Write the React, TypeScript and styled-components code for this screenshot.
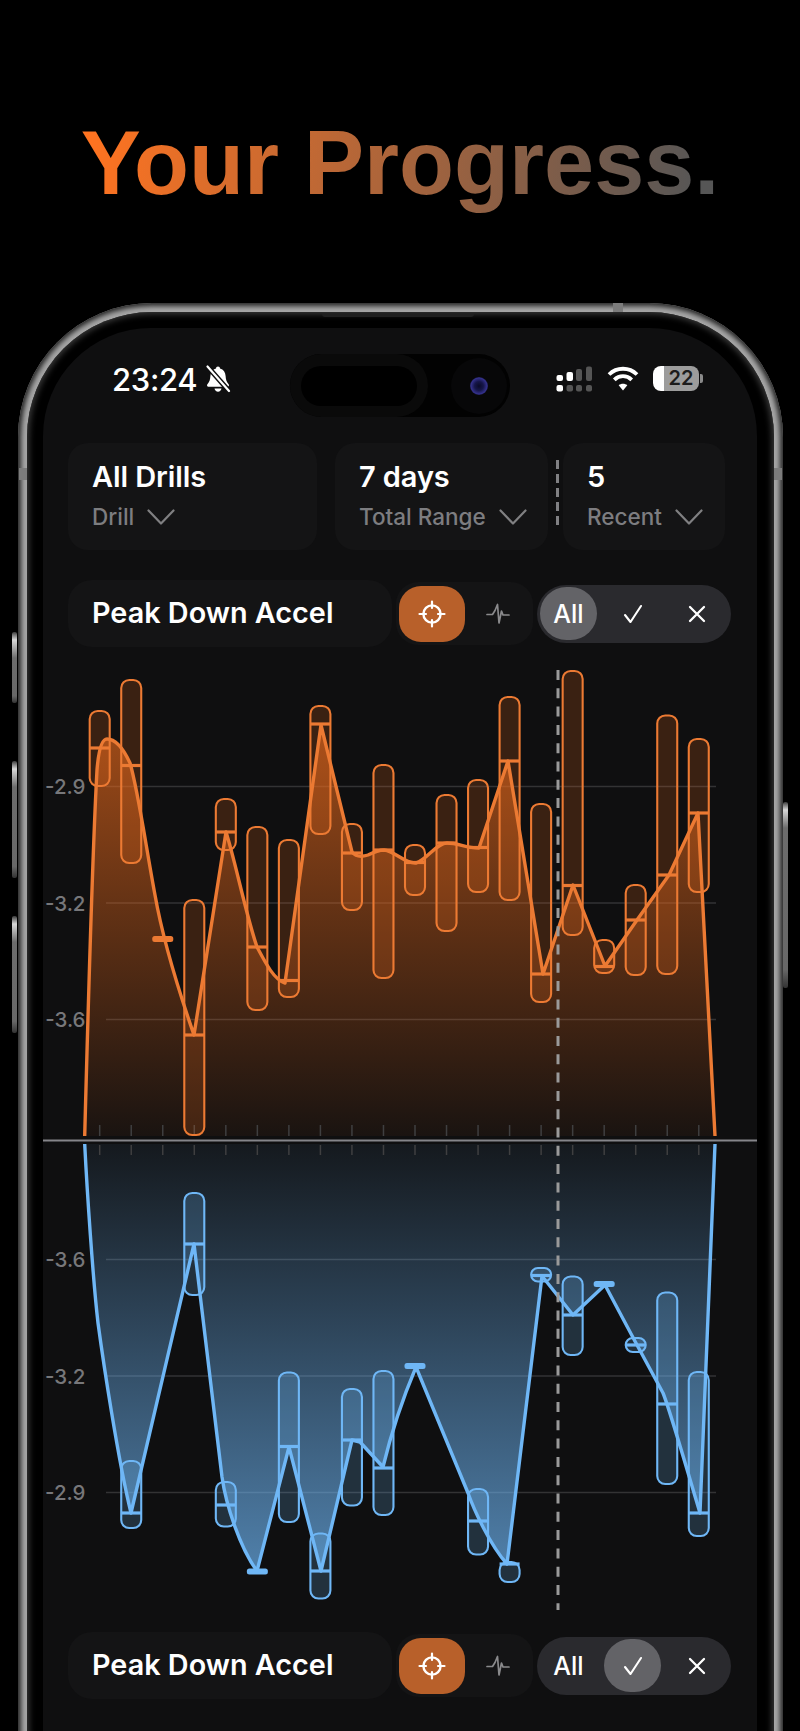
import React from "react";
import styled, { createGlobalStyle } from "styled-components";

const ORANGE = "#ec7a33";
const ORANGE_FILL = "#e8691c";
const BLUE = "#6fb7f6";
const FIRST_X = 99.7;
const STEP = 31.53;
const BAR_W = 20;

type Point = { i: number; top?: number; bottom?: number; tick: number };

const orangeBars: Point[] = [
  { i: 0, top: 711, bottom: 786, tick: 748 },
  { i: 1, top: 680, bottom: 863, tick: 765.5 },
  { i: 2, tick: 939 },
  { i: 3, top: 900, bottom: 1135, tick: 1035 },
  { i: 4, top: 799, bottom: 850, tick: 832 },
  { i: 5, top: 827, bottom: 1010, tick: 947 },
  { i: 6, top: 840, bottom: 997, tick: 980.5 },
  { i: 7, top: 706, bottom: 834, tick: 724 },
  { i: 8, top: 824, bottom: 910, tick: 853 },
  { i: 9, top: 765, bottom: 978, tick: 850 },
  { i: 10, top: 845, bottom: 895, tick: 862.5 },
  { i: 11, top: 795, bottom: 931, tick: 843 },
  { i: 12, top: 780, bottom: 892, tick: 847.5 },
  { i: 13, top: 697, bottom: 900, tick: 761 },
  { i: 14, top: 804, bottom: 1002, tick: 974 },
  { i: 15, top: 671, bottom: 935, tick: 885.5 },
  { i: 16, top: 940, bottom: 973, tick: 966.5 },
  { i: 17, top: 885, bottom: 975, tick: 920 },
  { i: 18, top: 715.5, bottom: 974, tick: 875 },
  { i: 19, top: 739, bottom: 892, tick: 813 },
];

const blueBars: Point[] = [
  { i: 1, top: 1461, bottom: 1528, tick: 1513 },
  { i: 3, top: 1193, bottom: 1295, tick: 1244 },
  { i: 4, top: 1482, bottom: 1526.5, tick: 1505 },
  { i: 5, tick: 1571.5 },
  { i: 6, top: 1372.5, bottom: 1522, tick: 1446.5 },
  { i: 7, top: 1533.5, bottom: 1598.5, tick: 1571 },
  { i: 8, top: 1389, bottom: 1505.5, tick: 1440 },
  { i: 9, top: 1371, bottom: 1515, tick: 1468 },
  { i: 10, tick: 1366 },
  { i: 12, top: 1489, bottom: 1554.5, tick: 1521 },
  { i: 13, top: 1562, bottom: 1582, tick: 1564 },
  { i: 14, top: 1268, bottom: 1281.5, tick: 1275.5 },
  { i: 15, top: 1276.5, bottom: 1355, tick: 1315 },
  { i: 16, tick: 1284 },
  { i: 17, top: 1338, bottom: 1352, tick: 1345 },
  { i: 18, top: 1292.5, bottom: 1484, tick: 1404 },
  { i: 19, top: 1372, bottom: 1536, tick: 1513 },
];

const orangeLine =
  "M84.7 1136 C87 1050 92 860 97 770 C99 745 103 739 107 739 C116 739 124 750 130 763 C138 790 146 847 155 895 C162 935 175 980 194 1035 L226 832 C235 860 246 915 257 947 C265 962 274 980 285 983 L321 725 L352 852 C356 857 362 857 368 855 C374 852 379 850 384 850 C395 851 405 864 416 863 C427 860 436 843 447 843 C458 843 466 848 479 848 L508 761 L543 974 L573 885 L605 966 L637 920 L669 875 L698 813 L715 1136";

const blueLine =
  "M84.7 1144 C87 1190 93 1280 98 1323 C103 1360 118 1460 131 1513 L194 1244 L222 1477 C226 1505 240 1548 257 1571 L289 1447 L321 1571 L352 1440 L360 1442 L383 1467 C392 1430 402 1400 416 1367 L468 1493 C474 1510 490 1545 507 1564 L542 1276 L573 1315 L605 1285 L637 1345 L663 1393 C670 1410 690 1480 700 1513 L715 1144";

const GlobalStyle = createGlobalStyle`
  html, body {
    margin: 0;
    padding: 0;
    background: #000;
  }
  * {
    box-sizing: border-box;
  }
`;

const Crosshair = () => (
  <svg width="28" height="28" viewBox="0 0 28 28" fill="none" stroke="#fff" strokeLinecap="round">
    <circle cx="14" cy="14" r="8.6" strokeWidth="2.4" />
    <path d="M14 1.5V8M14 20V26.5M1.5 14H8M20 14H26.5" strokeWidth="2.2" />
  </svg>
);

const Pulse = () => (
  <svg width="24" height="24" viewBox="0 0 24 24" fill="none" stroke="#8a8a8c" strokeWidth="1.7" strokeLinejoin="round" strokeLinecap="round">
    <path d="M1 12.5H6.5L9 8.5L11.5 2.5L13 21L15.5 9L17 13H23" />
  </svg>
);

const Chevron = () => (
  <svg width="28" height="16" viewBox="0 0 28 16" fill="none" stroke="#808082" strokeWidth="2.2" strokeLinecap="round" strokeLinejoin="round">
    <path d="M1.5 1.5L14 14.5L26.5 1.5" />
  </svg>
);

const Check = () => (
  <svg width="20" height="20" viewBox="0 0 20 20" fill="none" stroke="#fff" strokeWidth="2.1" strokeLinecap="round" strokeLinejoin="round">
    <path d="M2 11L7.5 18L18 2" />
  </svg>
);

const Cross = () => (
  <svg width="18" height="18" viewBox="0 0 18 18" fill="none" stroke="#fff" strokeWidth="2.3" strokeLinecap="round">
    <path d="M2 2L16 16M16 2L2 16" />
  </svg>
);

const BellSlash = () => (
  <svg width="26" height="28" viewBox="0 0 26 28" fill="#fff">
    <path d="M13 1.5c1.2 0 2 .8 2 1.900 3.600 1 5.400 4 5.600 7.600.2 3.600 1 6.200 3 8.300.8 1 .3 2.400-1 2.400H3.400c-1.300 0-1.800-1.400-1-2.400 2-2.100 2.800-4.700 3-8.300.2-3.600 2-6.600 5.600-7.600 0-1.100.8-1.900 2-1.900z" />
    <path d="M9.500 23.500h7c-.3 2-1.700 3.200-3.500 3.200s-3.200-1.200-3.500-3.200z" />
    <path d="M2.500 1.500L24 26" stroke="#0f0f10" strokeWidth="5" />
    <path d="M2.500 1.500L24 26" stroke="#fff" strokeWidth="2.200" strokeLinecap="round" />
  </svg>
);

const CellSignal = () => (
  <svg width="37" height="26" viewBox="0 0 37 26" fill="#fff">
    <rect x="0.500" y="9" width="6.500" height="6" rx="2" />
    <rect x="10.500" y="6" width="6.500" height="9" rx="2" />
    <rect x="20" y="3" width="6" height="12" rx="2" fill="#555" />
    <rect x="30" y="0.500" width="6" height="14.500" rx="2" fill="#555" />
    <rect x="0.500" y="19" width="6.500" height="6.500" rx="2" />
    <rect x="10.500" y="19" width="6.500" height="6.500" rx="2" fill="#555" />
    <rect x="20" y="19" width="6" height="6.500" rx="2" fill="#555" />
    <rect x="30" y="19" width="6" height="6.500" rx="2" fill="#555" />
  </svg>
);

const Wifi = () => (
  <svg width="32" height="25" viewBox="0 0 32 25" fill="none" stroke="#fff" strokeWidth="3.800">
    <path d="M2 8.500C9.800 .800 22.200 .800 30 8.500" />
    <path d="M7.300 13.800C12.200 9 19.800 9 24.700 13.800" />
    <path d="M16 24.500L11.700 19.300C14 17.300 18 17.300 20.300 19.300Z" fill="#fff" stroke="none" />
  </svg>
);

const ChartBars = ({ data, color, tint }: { data: Point[]; color: string; tint: string }) => (
  <>
    {data.map((d) => {
      const x = FIRST_X + STEP * d.i;
      if (d.top === undefined || d.bottom === undefined) {
        return (
          <rect key={d.i} x={x - 10.500} y={d.tick - 3} width={21} height={6} rx={2.500} fill={color} />
        );
      }
      const h = d.bottom - d.top;
      return (
        <g key={d.i}>
          <rect
            x={x - BAR_W / 2}
            y={d.top}
            width={BAR_W}
            height={h}
            rx={Math.min(8, h / 2)}
            fill={tint}
            stroke={color}
            strokeWidth={2.100}
          />
          <line x1={x - BAR_W / 2} x2={x + BAR_W / 2} y1={d.tick} y2={d.tick} stroke={color} strokeWidth={3.200} />
        </g>
      );
    })}
  </>
);

const Chart = () => {
  const ticks = Array.from({ length: 20 }, (_, i) => FIRST_X + STEP * i);
  return (
    <ChartSvg viewBox="43 660 714 960">
      <defs>
        <linearGradient id="orangeFill" gradientUnits="userSpaceOnUse" x1="0" x2="0" y1="700" y2="1136">
          <stop offset="0" stopColor={ORANGE_FILL} stopOpacity="0.7" />
          <stop offset="1" stopColor={ORANGE_FILL} stopOpacity="0.05" />
        </linearGradient>
        <linearGradient id="blueFill" gradientUnits="userSpaceOnUse" x1="0" x2="0" y1="1144" y2="1575">
          <stop offset="0" stopColor={BLUE} stopOpacity="0.06" />
          <stop offset="1" stopColor={BLUE} stopOpacity="0.68" />
        </linearGradient>
      </defs>

      {[786.5, 903, 1019.5, 1259.5, 1376, 1492.5].map((y) => (
        <line key={y} x1={106} x2={716} y1={y} y2={y} stroke="#333334" strokeWidth={1.500} />
      ))}
      {[
        ["-2.9", 794],
        ["-3.2", 910.5],
        ["-3.6", 1027],
        ["-3.6", 1267],
        ["-3.2", 1383.5],
        ["-2.9", 1500],
      ].map(([label, y]) => (
        <AxisLabel key={`${label}-${y}`} x={85.500} y={y as number} textAnchor="end">
          {label}
        </AxisLabel>
      ))}

      <path d={`${orangeLine} Z`} fill="url(#orangeFill)" />
      <path d={`${blueLine} Z`} fill="url(#blueFill)" />

      {ticks.map((x) => (
        <g key={x} stroke="#3f3f40" strokeWidth={1.500}>
          <line x1={x} x2={x} y1={1125} y2={1136} />
          <line x1={x} x2={x} y1={1145} y2={1155} />
        </g>
      ))}

      <ChartBars data={orangeBars} color={ORANGE} tint="rgba(232,105,28,0.2)" />
      <ChartBars data={blueBars} color={BLUE} tint="rgba(111,183,246,0.2)" />

      <path d={orangeLine} fill="none" stroke={ORANGE} strokeWidth={3.400} strokeLinejoin="round" />
      <path d={blueLine} fill="none" stroke={BLUE} strokeWidth={3.400} strokeLinejoin="round" />

      <line x1={43} x2={757} y1={1140.500} y2={1140.500} stroke="#85858a" strokeWidth={2} />
      <line x1={558} x2={558} y1={670} y2={1610} stroke="#9a9a9a" strokeWidth={3} strokeDasharray="10 8.300" />
    </ChartSvg>
  );
};

const MetricRow = ({ filter }: { filter: "all" | "check" }) => (
  <ControlRow>
    <MetricPill>Peak Down Accel</MetricPill>
    <ViewToggle>
      <ViewButton $active>
        <Crosshair />
      </ViewButton>
      <ViewButton>
        <Pulse />
      </ViewButton>
    </ViewToggle>
    <FilterPill>
      <FilterOption $active={filter === "all"}>All</FilterOption>
      <FilterOption $active={filter === "check"}>
        <Check />
      </FilterOption>
      <FilterOption>
        <Cross />
      </FilterOption>
    </FilterPill>
  </ControlRow>
);

const App = () => {
  return (
    <Page>
      <GlobalStyle />
      <HeadlineBlock>
        <Headline>Your Progress.</Headline>
      </HeadlineBlock>
      <Device>
        <SideButton $top={329} $height={71} />
        <SideButton $top={458} $height={117} />
        <SideButton $top={613} $height={117} />
        <SideButton $top={499} $height={186} $right />
        <AntennaBand $style="top: 0; left: 595px; width: 10px; height: 10px;" />
        <AntennaBand $style="top: 165px; left: 1px; width: 8px; height: 12px;" />
        <AntennaBand $style="top: 165px; right: 1px; width: 8px; height: 12px;" />
        <Bezel>
          <SpeakerSlit />
          <Screen>
            <StatusBar>
              <TimeGroup>
                <Time>23:24</Time>
                <BellSlash />
              </TimeGroup>
              <Island>
                <IslandCapsule>
                  <IslandSensor />
                </IslandCapsule>
                <CameraWell>
                  <CameraLens />
                </CameraWell>
              </Island>
              <StatusIcons>
                <CellSignal />
                <Wifi />
                <Battery>22</Battery>
              </StatusIcons>
            </StatusBar>

            <CardRow>
              <Card $width={249}>
                <CardValue>All Drills</CardValue>
                <CardLabel>
                  Drill <Chevron />
                </CardLabel>
              </Card>
              <CardGap />
              <Card $width={213}>
                <CardValue>7 days</CardValue>
                <CardLabel>
                  Total Range <Chevron />
                </CardLabel>
              </Card>
              <DashDivider />
              <Card $width={162}>
                <CardValue>5</CardValue>
                <CardLabel>
                  Recent <Chevron />
                </CardLabel>
              </Card>
            </CardRow>

            <MetricRow filter="all" />
            <Chart />
            <MetricRow filter="check" />
          </Screen>
        </Bezel>
      </Device>
    </Page>
  );
};

export default App;

const Page = styled.div`
  width: 800px;
  height: 1731px;
  overflow: hidden;
  background: #000;
  font-family: Inter, "Liberation Sans", sans-serif;
`;

const HeadlineBlock = styled.div`
  height: 303px;
  padding-top: 112px;
`;

const Headline = styled.h1`
  width: fit-content;
  margin: 0 auto;
  font-family: "Liberation Sans", Arial, sans-serif;
  font-size: 90px;
  line-height: 102px;
  font-weight: 700;
  color: transparent;
  background: linear-gradient(100deg, #ff7320 2%, #565656 96%);
  -webkit-background-clip: text;
  background-clip: text;
`;

const Device = styled.div`
  position: relative;
  width: 765px;
  height: 1560px;
  margin-left: 18px;
  padding: 9px;
  border-radius: 134px;
  background: #a6a6a6;
  box-shadow: inset 0 0 5px 3px #262626;
`;

const SideButton = styled.div<{ $top: number; $height: number; $right?: boolean }>`
  position: absolute;
  top: ${(p) => p.$top}px;
  ${(p) => (p.$right ? "right: -5px;" : "left: -6px;")}
  width: 5px;
  height: ${(p) => p.$height}px;
  border-radius: 2px;
  background: linear-gradient(180deg, #3a3a3a 0, #d8d8d8 8px, #6c6c6c 26px, #686868 90%, #333 100%);
`;

const AntennaBand = styled.div<{ $style: string }>`
  position: absolute;
  ${(p) => p.$style}
  background: #7c7c7c;
`;

const Bezel = styled.div`
  position: relative;
  height: 100%;
  padding: 16px 17px 15px 16px;
  border-radius: 125px;
  background: #000;
  box-shadow: inset 0 0 6px 2px #3c3c3c;
`;

const SpeakerSlit = styled.div`
  position: absolute;
  top: 2px;
  left: 295px;
  width: 152px;
  height: 3px;
  border-radius: 0 0 4px 4px;
  background: #1f1f1f;
`;

const Screen = styled.div`
  height: 100%;
  padding: 26px 26px 0 25px;
  border-radius: 108px;
  background: #0f0f10;
  color: #fff;
`;

const StatusBar = styled.div`
  display: flex;
  height: 63px;
  margin-bottom: 26px;
`;

const TimeGroup = styled.div`
  display: flex;
  align-items: center;
  gap: 8px;
  width: 222px;
  height: 50px;
  padding-left: 44px;
`;

const Time = styled.span`
  font-size: 31px;
  font-weight: 500;
  letter-spacing: -0.3px;
`;

const Island = styled.div`
  display: flex;
  align-items: center;
  justify-content: space-between;
  width: 220px;
  height: 63px;
  padding-right: 3px;
  border-radius: 32px;
  background: #020202;
`;

const IslandCapsule = styled.div`
  display: flex;
  align-items: center;
  justify-content: center;
  width: 138px;
  height: 63px;
  border-radius: 32px;
  background: #0a0a0a;
`;

const IslandSensor = styled.div`
  width: 116px;
  height: 40px;
  border-radius: 20px;
  background: #000;
`;

const CameraWell = styled.div`
  display: flex;
  align-items: center;
  justify-content: center;
  width: 56px;
  height: 56px;
  border-radius: 50%;
  background: #070708;
`;

const CameraLens = styled.div`
  width: 18px;
  height: 18px;
  border-radius: 50%;
  background: radial-gradient(circle, #0a0a28 0, #16164a 35%, #33308a 62%, #15142e 80%, #070708 100%);
`;

const StatusIcons = styled.div`
  display: flex;
  align-items: flex-start;
  gap: 14px;
  padding: 12px 0 0 46px;
`;

const Battery = styled.div`
  position: relative;
  width: 46px;
  height: 25px;
  border-radius: 8px;
  padding-left: 10px;
  background: linear-gradient(90deg, #fff 23%, #9c9c9c 23%);
  color: #1c1c1c;
  font-size: 20px;
  font-weight: 600;
  line-height: 25px;
  text-align: center;

  &::after {
    content: "";
    position: absolute;
    top: 8px;
    right: -4px;
    width: 3px;
    height: 9px;
    border-radius: 0 2px 2px 0;
    background: #8a8a8a;
  }
`;

const CardRow = styled.div`
  display: flex;
  height: 107px;
  margin-bottom: 30px;
`;

const Card = styled.div<{ $width: number }>`
  width: ${(p) => p.$width}px;
  padding: 17px 0 0 24px;
  border-radius: 20px;
  background: #141415;
`;

const CardGap = styled.div`
  width: 18px;
`;

const DashDivider = styled.div`
  width: 3px;
  height: 65px;
  margin: 17px 4px 0 8px;
  background: repeating-linear-gradient(180deg, #808083 0 9px, transparent 9px 14px);
`;

const CardValue = styled.div`
  font-size: 29px;
  font-weight: 600;
  letter-spacing: -0.1px;
  line-height: 33px;
`;

const CardLabel = styled.div`
  display: flex;
  align-items: center;
  gap: 13px;
  margin-top: 10px;
  color: #7d7d80;
  font-size: 22.5px;
  font-weight: 500;
  line-height: 28px;
`;

const ControlRow = styled.div`
  display: flex;
  align-items: center;
  gap: 4px;
  height: 67px;
`;

const MetricPill = styled.div`
  display: flex;
  align-items: center;
  width: 324px;
  height: 67px;
  padding: 0 0 2px 24px;
  border-radius: 24px;
  background: #141415;
  font-size: 28.8px;
  font-weight: 600;
`;

const ViewToggle = styled.div`
  display: flex;
  align-items: center;
  width: 137px;
  height: 63px;
  padding-left: 3px;
  border-radius: 22px;
  background: #141415;
`;

const ViewButton = styled.div<{ $active?: boolean }>`
  display: flex;
  align-items: center;
  justify-content: center;
  width: 66px;
  height: 56px;
  border-radius: 22px;
  background: ${(p) => (p.$active ? "#b8602a" : "transparent")};
`;

const FilterPill = styled.div`
  display: flex;
  align-items: center;
  justify-content: space-between;
  width: 194px;
  height: 58px;
  padding: 0 6px 0 3px;
  border-radius: 29px;
  background: #2a2a2e;
`;

const FilterOption = styled.div<{ $active?: boolean }>`
  display: flex;
  align-items: center;
  justify-content: center;
  width: 57px;
  height: 53px;
  border-radius: 27px;
  background: ${(p) => (p.$active ? "#636367" : "transparent")};
  font-size: 25px;
  font-weight: 500;
`;

const ChartSvg = styled.svg`
  display: block;
  width: 714px;
  height: 960px;
  margin: 13px -26px 12px -25px;
`;

const AxisLabel = styled.text`
  fill: #77777a;
  font-family: Inter, "Liberation Sans", sans-serif;
  font-size: 20.5px;
  font-weight: 500;
`;
